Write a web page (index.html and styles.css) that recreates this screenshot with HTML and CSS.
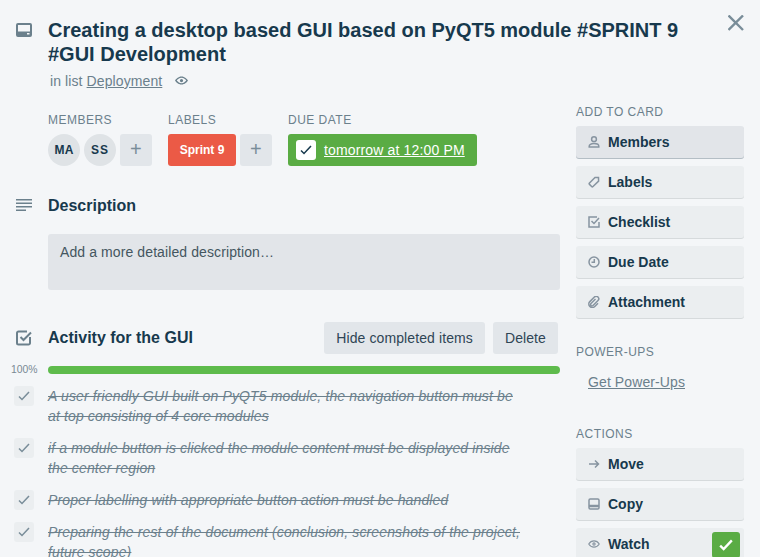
FILE: index.html
```html
<!DOCTYPE html>
<html lang="en">
<head>
  <meta charset="UTF-8" />
  <title>Card detail</title>
  <meta name="viewport" content="width=device-width, initial-scale=1" />
  <link rel="stylesheet" href="styles.css">
</head>
<body>
  <div class="window">
    <button class="close" aria-label="Close">
      <svg width="16" height="16" viewBox="0 0 16 16"><path d="M.5 .5L15 15M15 .5L.5 15" /></svg>
    </button>

    <header class="card-head">
      <svg class="sec-icon" width="16" height="16" viewBox="0 0 16 16"><path d="M2 1h12a2 2 0 0 1 2 2v10a2 2 0 0 1-2 2H2a2 2 0 0 1-2-2V3a2 2 0 0 1 2-2zM2 3v6.500h12V3zm9 8v1.500h2.500V11z" fill-rule="evenodd" /></svg>
      <h1>Creating a desktop based GUI based on PyQT5 module #SPRINT 9 #GUI Development</h1>
      <p class="in-list">in list <a href="#">Deployment</a>
        <svg class="eye" width="13" height="13" viewBox="0 0 16 16"><path d="M8 3c4 0 7 3.300 8 5-1 1.700-4 5-8 5s-7-3.300-8-5c1-1.700 4-5 8-5zm0 1.700C5.300 4.700 3.200 6.700 2.100 8c1.100 1.300 3.200 3.300 5.900 3.300s4.800-2 5.900-3.300c-1.100-1.300-3.200-3.300-5.900-3.300zM8 6a2 2 0 1 1 0 4 2 2 0 0 1 0-4z" fill-rule="evenodd" /></svg>
      </p>
    </header>

    <div class="columns">
      <main class="main">
        <div class="meta">
          <div class="meta-group">
            <h3>Members</h3>
            <div class="meta-row">
              <span class="avatar">MA</span>
              <span class="avatar spaced">SS</span>
              <span class="add">+</span>
            </div>
          </div>
          <div class="meta-group">
            <h3>Labels</h3>
            <div class="meta-row">
              <span class="label-red">Sprint 9</span>
              <span class="add">+</span>
            </div>
          </div>
          <div class="meta-group">
            <h3>Due Date</h3>
            <div class="due">
              <span class="due-check"><svg width="12" height="10" viewBox="0 0 12 10"><path d="M1 5.500l3 3 7-7.500" /></svg></span>
              <a href="#">tomorrow at 12:00 PM</a>
            </div>
          </div>
        </div>

        <section class="desc">
          <div class="sec-head">
            <svg class="sec-icon" width="16" height="16" viewBox="0 0 16 16"><path d="M0 1h16v1.500H0zM0 4.500h16V6H0zM0 8h16v1.500H0zM0 11.500h10V13H0z" /></svg>
            <h2>Description</h2>
          </div>
          <div class="desc-box">Add a more detailed description…</div>
        </section>

        <section class="checklist">
          <div class="sec-head">
            <svg class="sec-icon check-icon" width="16" height="16" viewBox="0 0 16 16"><path d="M11 1.500H2.500a1.500 1.500 0 0 0-1.500 1.500v10a1.500 1.500 0 0 0 1.500 1.500h10a1.500 1.500 0 0 0 1.500-1.500V7" /><path d="M4.500 7l3 3L15 2.500" /></svg>
            <h2>Activity for the GUI</h2>
            <div class="head-btns">
              <button class="btn">Hide completed items</button>
              <button class="btn">Delete</button>
            </div>
          </div>
          <div class="progress">
            <span>100%</span>
            <div class="bar"></div>
          </div>
          <ul class="items">
            <li><span class="tick"><svg width="12" height="10" viewBox="0 0 12 10"><path d="M1 5.500l3 3 7-7.500" /></svg></span><p>A user friendly GUI built on PyQT5 module, the navigation button must be at top consisting of 4 core modules</p></li>
            <li><span class="tick"><svg width="12" height="10" viewBox="0 0 12 10"><path d="M1 5.500l3 3 7-7.500" /></svg></span><p>if a module button is clicked the module content must be displayed inside the center region</p></li>
            <li><span class="tick"><svg width="12" height="10" viewBox="0 0 12 10"><path d="M1 5.500l3 3 7-7.500" /></svg></span><p>Proper labelling with appropriate button action must be handled</p></li>
            <li><span class="tick"><svg width="12" height="10" viewBox="0 0 12 10"><path d="M1 5.500l3 3 7-7.500" /></svg></span><p>Preparing the rest of the document (conclusion, screenshots of the project, future scope)</p></li>
          </ul>
        </section>
      </main>

      <aside class="side">
        <h3>Add to card</h3>
        <div class="side-list">
          <a class="side-btn active" href="#"><svg width="12" height="12" viewBox="0 0 12 12"><circle cx="6" cy="3.200" r="2.400" /><path d="M1.200 11v-.8c0-1.600 1.700-2.600 4.800-2.600s4.800 1 4.800 2.600v.8z" /></svg>Members</a>
          <a class="side-btn" href="#"><svg width="12" height="12" viewBox="0 0 12 12"><path d="M1.500 7L7 1.500l3.500.1.100 3.500L5 10.500a1 1 0 0 1-1.400 0L1.500 8.400a1 1 0 0 1 0-1.400z" /></svg>Labels</a>
          <a class="side-btn" href="#"><svg width="12" height="12" viewBox="0 0 12 12"><path d="M9 1H1v10h10V6" /><path d="M3.500 5l2.500 2.500L11 2" /></svg>Checklist</a>
          <a class="side-btn" href="#"><svg width="12" height="12" viewBox="0 0 12 12"><circle cx="6" cy="6" r="5" /><path d="M6.300 3v3.300H3.500" /></svg>Due Date</a>
          <a class="side-btn" href="#"><svg width="12" height="12" viewBox="0 0 12 12"><path d="M7.500 3L3 7.500a1.400 1.400 0 0 0 2 2l5-5a2.500 2.500 0 0 0-3.600-3.500L1.800 5.600a3.500 3.500 0 0 0 5 4.900l3.200-3.200" /></svg>Attachment</a>
        </div>

        <h3 class="gap-top">Power-Ups</h3>
        <a class="get-ups" href="#">Get Power-Ups</a>

        <h3 class="gap-actions">Actions</h3>
        <div class="side-list">
          <a class="side-btn" href="#"><svg width="12" height="12" viewBox="0 0 12 12"><path d="M1 6h9.500M7 2.500L10.500 6 7 9.500" /></svg>Move</a>
          <a class="side-btn" href="#"><svg width="12" height="12" viewBox="0 0 12 12"><rect x="1" y="1" width="10" height="10" rx="1.200" /><path class="band" d="M1 8h10" /></svg>Copy</a>
          <a class="side-btn" href="#"><svg width="12" height="12" viewBox="0 0 16 16"><path d="M1 8c1.500-2.500 4-4.200 7-4.200s5.500 1.700 7 4.200c-1.500 2.500-4 4.200-7 4.200S2.500 10.500 1 8z" /><circle cx="8" cy="8" r="1.500" /></svg>Watch<span class="watch-on"><svg width="14" height="12" viewBox="0 0 12 10"><path d="M1 5.500l3 3 7-7.500" /></svg></span></a>
        </div>
      </aside>
    </div>
  </div>
</body>
</html>
```

FILE: styles.css
```css
* { box-sizing: border-box; }
html, body {
  margin: 0; padding: 0;
  height: 100%;
  overflow: hidden;
  background: #f4f6f8;
  font-family: 'Liberation Sans', Arial, sans-serif;
  font-size: 14px;
  letter-spacing: .1px;
  color: #17394d;
}
.window {
  position: relative;
  width: 760px; height: 557px;
  padding: 18px 16px 0;
  overflow: hidden;
}
.close {
  position: absolute; top: 15px; right: 16px;
  width: 16px; height: 16px;
  padding: 0; border: 0; background: none;
  line-height: 0;
}
.close path { stroke: #798d99; stroke-width: 2.4; fill: none; }

.sec-icon { flex: none; fill: #6b808c; }
.check-icon { fill: none; stroke: #6b808c; stroke-width: 2; }

.card-head { position: relative; padding-left: 32px; padding-right: 40px; }
.card-head .sec-icon { position: absolute; left: 0; top: 4px; }
h1 {
  margin: 0;
  font-size: 20px; line-height: 24px;
  font-weight: bold;
  letter-spacing: 0;
}
.in-list {
  margin: 5px 0 0 2px;
  line-height: 20px;
  color: #6b808c;
}
.in-list a, .get-ups { color: #6b808c; text-decoration: underline; }
.eye { fill: #6b808c; margin-left: 9px; vertical-align: -1px; }

.columns { display: flex; gap: 16px; margin-top: 21px; }
.main { width: 512px; margin-left: 32px; flex: none; }
.side { width: 168px; flex: none; margin-top: -8px; }

h3 {
  margin: 0;
  font-size: 12px; line-height: 16px;
  font-weight: normal;
  text-transform: uppercase;
  letter-spacing: .04em;
  color: #6b808c;
}

.meta { display: flex; gap: 16px; }
.meta-group h3 { margin-bottom: 6px; }
.meta-row { display: flex; gap: 4px; }
.avatar {
  width: 32px; height: 32px;
  border-radius: 50%;
  background: #dfe3e6;
  font-size: 12px; font-weight: bold;
  line-height: 32px; text-align: center;
}
.avatar.spaced { letter-spacing: 1px; }
.add {
  width: 32px; height: 32px;
  border-radius: 3px;
  background: #e2e6ea;
  color: #798d99;
  font-size: 20px; line-height: 31px;
  text-align: center;
}
.label-red {
  width: 68px; height: 32px;
  border-radius: 3px;
  background: #eb5a46;
  color: #fff;
  font-size: 12px; font-weight: bold;
  letter-spacing: 0;
  line-height: 32px; text-align: center;
}
.due {
  display: flex; align-items: center; gap: 8px;
  height: 32px; width: 189px;
  padding-left: 8px;
  border-radius: 3px;
  background: #5aac44;
}
.due a { color: #fff; text-decoration: underline; letter-spacing: .15px; }
.due-check {
  display: flex; align-items: center; justify-content: center;
  width: 20px; height: 20px;
  border-radius: 3px;
  background: #fff;
}
.due-check path { stroke: #17394d; stroke-width: 1.500; fill: none; }

.sec-head { position: relative; display: flex; align-items: center; }
.sec-head .sec-icon { position: absolute; left: -32px; }
h2 { margin: 0; font-size: 16px; line-height: 20px; font-weight: bold; letter-spacing: 0; }

.desc { margin-top: 30px; }
.desc-box {
  height: 56px;
  margin-top: 18px;
  padding: 8px 12px;
  border-radius: 3px;
  background: #e2e5e9;
  line-height: 20px;
  color: #44565f;
}

.checklist { margin-top: 32px; }
.checklist .sec-head { height: 32px; }
.head-btns { margin-left: auto; margin-right: 2px; display: flex; gap: 8px; }
.btn {
  height: 32px; padding: 0 12px;
  border: 0; border-radius: 3px;
  background: #e2e6ea;
  color: #2f4555;
  font: 14px 'Liberation Sans', Arial, sans-serif;
  letter-spacing: .1px;
}

.progress { position: relative; height: 8px; margin-top: 12px; }
.progress span {
  position: absolute; left: -37px; top: -4px;
  font-size: 10.4px; line-height: 16px;
  letter-spacing: 0;
  color: #7a8a94;
}
.bar { height: 8px; border-radius: 4px; background: #5ebb4c; }

.items { list-style: none; margin: 12px 0 0; padding: 0; }
.items li { position: relative; padding-bottom: 12px; }
.items p {
  margin: 0; width: 478px;
  line-height: 20px;
  font-style: italic;
  letter-spacing: .13px;
  text-decoration: line-through;
  color: #6b808c;
}
.tick {
  position: absolute; left: -34px; top: 0;
  display: flex; align-items: center; justify-content: center;
  width: 20px; height: 20px;
  border-radius: 3px;
  background: #ebeef0;
}
.tick path { stroke: #798d99; stroke-width: 1.500; fill: none; }

.side h3 { margin-bottom: 6px; }
.side-list { display: flex; flex-direction: column; gap: 8px; }
.side-btn {
  position: relative;
  display: flex; align-items: center; gap: 8px;
  height: 32px;
  padding-left: 12px;
  border-radius: 3px;
  background: #ebeef0;
  box-shadow: 0 1px 0 #d6dadc;
  color: #17394d;
  font-weight: bold;
  letter-spacing: 0;
  text-decoration: none;
}
.side-btn.active { background: #e2e5e9; box-shadow: 0 1px 0 #b4bec5; }
.side-btn svg { flex: none; fill: none; stroke: #8794a0; stroke-width: 1.500; }
.side-btn .band { stroke-width: 2.500; }
.watch-on {
  position: absolute; right: 4px; top: 4px;
  display: flex; align-items: center; justify-content: center;
  width: 28px; height: 26px;
  border-radius: 3px;
  background: #5aac44;
}
.side-btn .watch-on svg { stroke: #fff; stroke-width: 2; }
.side h3.gap-top { margin-top: 26px; margin-bottom: 12px; }
.get-ups { display: block; padding-left: 12px; line-height: 20px; }
.side h3.gap-actions { margin-top: 34px; }
```
